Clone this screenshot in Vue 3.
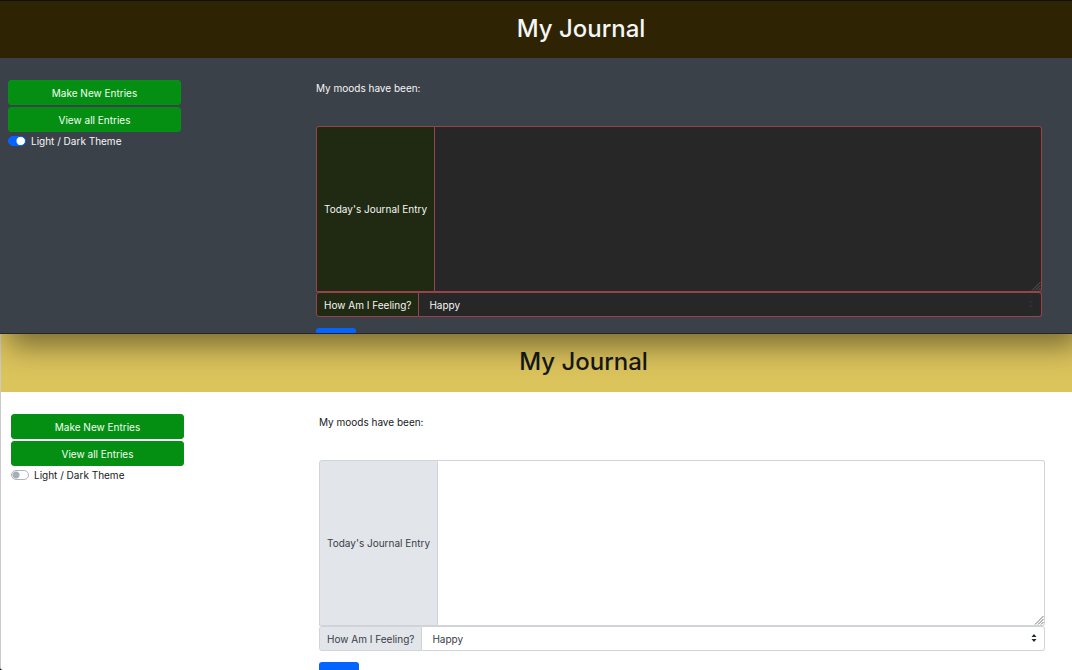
<script setup>
import { reactive } from 'vue'

const windows = reactive([
  { id: 'dark', dark: true, entry: '', mood: 'Happy' },
  { id: 'light', dark: false, entry: '', mood: 'Happy' }
])
</script>

<template>
  <div class="desktop">
    <section v-for="w in windows" :key="w.id" class="window" :class="[w.id, { night: w.dark }]">
      <header class="banner"><h1>My Journal</h1></header>
      <div class="content">
        <nav class="side">
          <button type="button" class="nav-button">Make New Entries</button>
          <button type="button" class="nav-button">View all Entries</button>
          <label class="switch">
            <input v-model="w.dark" type="checkbox" />
            <span>Light / Dark Theme</span>
          </label>
        </nav>
        <main>
          <p>My moods have been:</p>
          <form @submit.prevent>
            <div class="group entry">
              <label :for="w.id + '-entry'">Today's Journal Entry</label>
              <textarea :id="w.id + '-entry'" v-model="w.entry"></textarea>
              <svg class="grip" viewBox="0 0 10 10" aria-hidden="true">
                <path d="M1 9.5L9.5 1M4 9.5L9.5 4M7 9.5L9.5 7" />
              </svg>
            </div>
            <div class="group mood">
              <label :for="w.id + '-mood'">How Am I Feeling?</label>
              <select :id="w.id + '-mood'" v-model="w.mood">
                <option>Happy</option>
              </select>
              <svg class="arrows" viewBox="0 0 6 8" aria-hidden="true">
                <path d="M3 0L5.5 3H.5zM3 8L5.5 5H.5z" />
              </svg>
            </div>
            <button type="submit" class="submit" aria-label="Submit"></button>
          </form>
        </main>
      </div>
    </section>
  </div>
</template>

<style>
body {
  margin: 0;
}
</style>

<style scoped>
* {
  box-sizing: border-box;
}
.desktop {
  display: grid;
  grid-template-rows: calc(50vh - 1px) 1fr;
  height: 100vh;
  overflow: hidden;
  background: #000;
  font-family: Inter, "Liberation Sans", sans-serif;
  font-size: 10px;
  line-height: 16px;
}
.window {
  --page: #fff;
  --banner: #dcc45c;
  --text: #16191c;
  --line: #d0d4d9;
  --label: #e2e5ea;
  --label-text: #394047;
  --field: #fff;
  --grip: #777;
  --arrow: #24292e;
  min-height: 0;
  background: var(--page);
  color: var(--text);
}
.night {
  --page: #3b4148;
  --banner: #2e2403;
  --text: #f5f6f7;
  --line: #98434a;
  --label: #202a12;
  --label-text: #f5f6f2;
  --field: #272727;
  --grip: #595959;
  --arrow: #2d2f35;
}
.dark {
  position: relative;
  z-index: 1;
  box-shadow: 8px 12px 28px rgba(0, 0, 0, 0.46);
  clip-path: inset(0 0 -60px 0);
  display: grid;
  grid-template-rows: auto minmax(0, 1fr);
  border-top: 1px solid #141001;
  border-bottom: 1px solid #24262a;
}
.light {
  overflow: hidden;
  border-left: 1px solid #c9c9cf;
  border-bottom-left-radius: 3px;
}
.banner {
  display: flex;
  justify-content: center;
  align-items: center;
  height: 57px;
  padding: 0 0 2px 90px;
  background: var(--banner);
}
.light .banner {
  height: 58px;
  padding-left: 94px;
}
h1 {
  margin: 0;
  font-size: 24px;
  font-weight: 500;
  line-height: 32px;
}
.content {
  display: grid;
  grid-template-columns: 173px minmax(0, 1fr);
  column-gap: 135px;
  padding: 22px 30px 0 8px;
  overflow: hidden;
}
.light .content {
  padding-left: 10px;
  padding-right: 27px;
}
.side {
  display: flex;
  flex-direction: column;
  gap: 2px;
}
button,
textarea,
select {
  font: inherit;
  color: inherit;
}
.nav-button {
  height: 25px;
  padding: 0;
  border: 1px solid #079018;
  border-radius: 3px;
  background: #048f12;
  color: #f4fff4;
}
.switch {
  display: flex;
  align-items: center;
  gap: 5px;
  height: 14px;
}
.switch input {
  appearance: none;
  width: 18px;
  height: 10px;
  margin: 0;
  border: 1px solid #adb5bd;
  border-radius: 5px;
  background: radial-gradient(circle at 4px 4px, #a5afba 3px, transparent 4px) #fff;
}
.switch input:checked {
  border-color: #0563ff;
  background: radial-gradient(circle at 12px 4px, #fff 4px, transparent 5px) #0563ff;
}
p {
  margin: 0 0 30px;
}
.group {
  position: relative;
  display: flex;
}
.group label {
  display: flex;
  align-items: center;
  padding: 0 7px;
  border: 1px solid var(--line);
  background: var(--label);
  color: var(--label-text);
}
.entry {
  height: 166px;
}
.entry label {
  border-radius: 3px 0 0 0;
}
.mood {
  height: 25px;
}
.mood label {
  border-radius: 3px 0 0 3px;
}
textarea,
select {
  appearance: none;
  flex: 1;
  min-width: 0;
  margin: 0;
  border: 1px solid var(--line);
  border-left: 0;
  border-radius: 0 3px 3px 0;
  background: var(--field);
  outline: 0;
}
textarea {
  resize: none;
  padding: 4px 8px;
}
select {
  padding: 0 10px;
  color: var(--label-text);
}
.grip {
  position: absolute;
  right: 1px;
  bottom: 1px;
  width: 10px;
  height: 10px;
  fill: none;
  stroke: var(--grip);
  pointer-events: none;
}
.arrows {
  position: absolute;
  right: 8px;
  top: 8px;
  width: 6px;
  height: 8px;
  fill: var(--arrow);
  pointer-events: none;
}
.submit {
  display: block;
  width: 40px;
  height: 25px;
  margin-top: 11px;
  border: 0;
  border-radius: 3px;
  background: #0563ff;
}
</style>
